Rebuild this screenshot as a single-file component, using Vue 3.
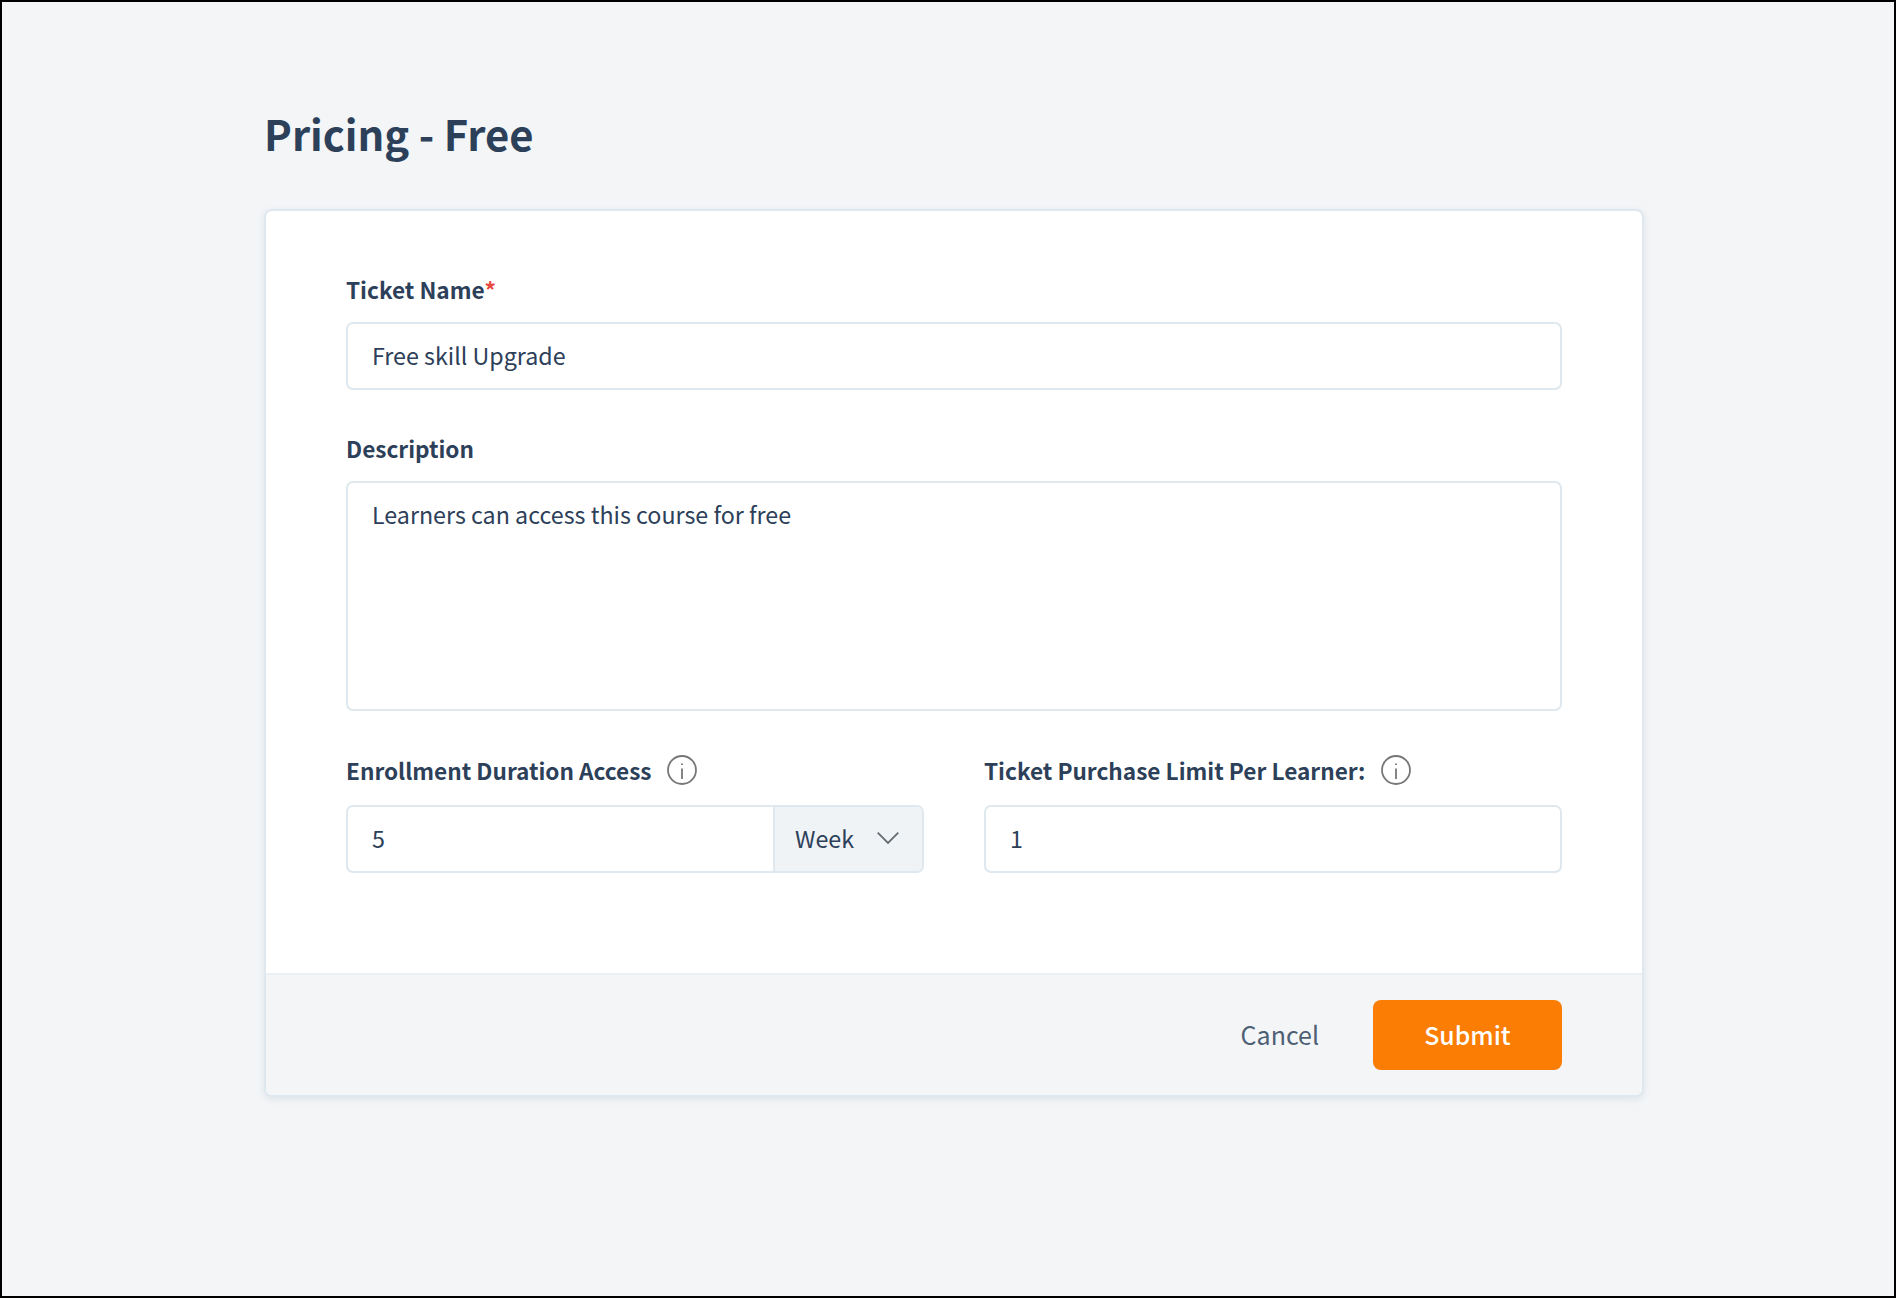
<script setup>
</script>

<template>
  <div class="page">
    <div class="wrap">
      <h1 class="title">Pricing - Free</h1>
      <div class="card">
        <div class="body">
          <div class="field">
            <label class="label">Ticket Name<span class="req">*</span></label>
            <div class="input">Free skill Upgrade</div>
          </div>
          <div class="field second">
            <label class="label">Description</label>
            <div class="input area">Learners can access this course for free</div>
          </div>
          <div class="cols">
            <div class="field">
              <label class="label">Enrollment Duration Access<svg class="info" viewBox="0 0 30 30"><circle cx="15" cy="15" r="14" /><path d="M15 13.5V24" /><path d="M15 8.5v1.6" /></svg></label>
              <div class="group">
                <div class="group-value">5</div>
                <div class="addon">Week<svg class="chev" viewBox="0 0 22 12"><path d="M0.7 0.7L11 11L21.3 0.7" /></svg></div>
              </div>
            </div>
            <div class="field">
              <label class="label">Ticket Purchase Limit Per Learner:<svg class="info limit" viewBox="0 0 30 30"><circle cx="15" cy="15" r="14" /><path d="M15 13.5V24" /><path d="M15 8.5v1.6" /></svg></label>
              <div class="input">1</div>
            </div>
          </div>
        </div>
        <div class="footer">
          <span class="cancel">Cancel</span>
          <span class="submit">Submit</span>
        </div>
      </div>
    </div>
  </div>
</template>

<style scoped>
.page {
  box-sizing: border-box;
  width: 1896px;
  height: 1298px;
  border: 2px solid #000;
  background: #f3f5f7;
  padding: 103px 250px 0 262px;
  font-family: "Noto Sans CJK SC", "Noto Sans", sans-serif;
  color: #2d4059;
}
.title {
  margin: 0 0 48px;
  font-size: 41.8px;
  line-height: 56px;
  font-weight: 700;
  color: #2d4059;
}
.card {
  box-sizing: border-box;
  width: 1380px;
  height: 888px;
  background: #fff;
  border: 2px solid #dfe8ee;
  border-radius: 8px;
  box-shadow: 0 2px 6px rgba(160, 180, 195, 0.25);
  display: flex;
  flex-direction: column;
  overflow: hidden;
}
.body {
  flex: 1;
  padding: 63px 80px 0;
}
.field { display: flex; flex-direction: column; }
.second { margin-top: 43px; }
.label {
  box-sizing: border-box;
  display: flex;
  align-items: center;
  height: 32px;
  padding-bottom: 2px;
  margin-bottom: 16px;
  font-size: 22.6px;
  font-weight: 600;
  white-space: pre;
  color: #2d4059;
}
.req { color: #e8483f; }
.input {
  box-sizing: border-box;
  height: 68px;
  border: 2px solid #dfe8ee;
  border-radius: 7px;
  padding: 0 24px 3px;
  display: flex;
  align-items: center;
  font-size: 23.25px;
  color: #2d4059;
}
.area {
  height: 230px;
  align-items: flex-start;
  padding-top: 13px;
  line-height: 36px;
}
.cols {
  display: grid;
  grid-template-columns: 578px 578px;
  column-gap: 60px;
  margin-top: 43px;
}
.cols .label {
  padding-bottom: 0;
  margin-bottom: 19px;
}
.group {
  box-sizing: border-box;
  height: 68px;
  border: 2px solid #dfe8ee;
  border-radius: 7px;
  display: flex;
  overflow: hidden;
  font-size: 23.25px;
}
.group-value {
  flex: 1;
  padding: 0 24px 3px;
  display: flex;
  align-items: center;
}
.addon {
  box-sizing: border-box;
  width: 149px;
  border-left: 2px solid #dfe8ee;
  background: #f0f3f6;
  display: flex;
  align-items: center;
  justify-content: space-between;
  padding: 0 23px 3px 20px;
}
.chev {
  width: 22px;
  height: 12px;
  fill: none;
  stroke: #666d75;
  stroke-width: 1.8;
}
.info {
  width: 30px;
  height: 30px;
  margin-left: 15px;
  fill: none;
  stroke: #777;
  stroke-width: 1.8;
}
.limit { margin-left: 16px; }
.footer {
  height: 122px;
  flex: none;
  background: #f3f5f7;
  border-top: 2px solid #eef1f4;
  box-sizing: border-box;
  display: flex;
  align-items: center;
  justify-content: flex-end;
  padding: 0 80px 0 0;
  gap: 54px;
}
.cancel {
  font-size: 25px;
  padding-bottom: 2px;
  color: #4e5f74;
}
.submit {
  box-sizing: border-box;
  width: 189px;
  height: 70px;
  padding-bottom: 2px;
  border-radius: 8px;
  background: #fb7d03;
  color: #fff;
  font-size: 24.8px;
  font-weight: 500;
  display: flex;
  align-items: center;
  justify-content: center;
}
</style>
